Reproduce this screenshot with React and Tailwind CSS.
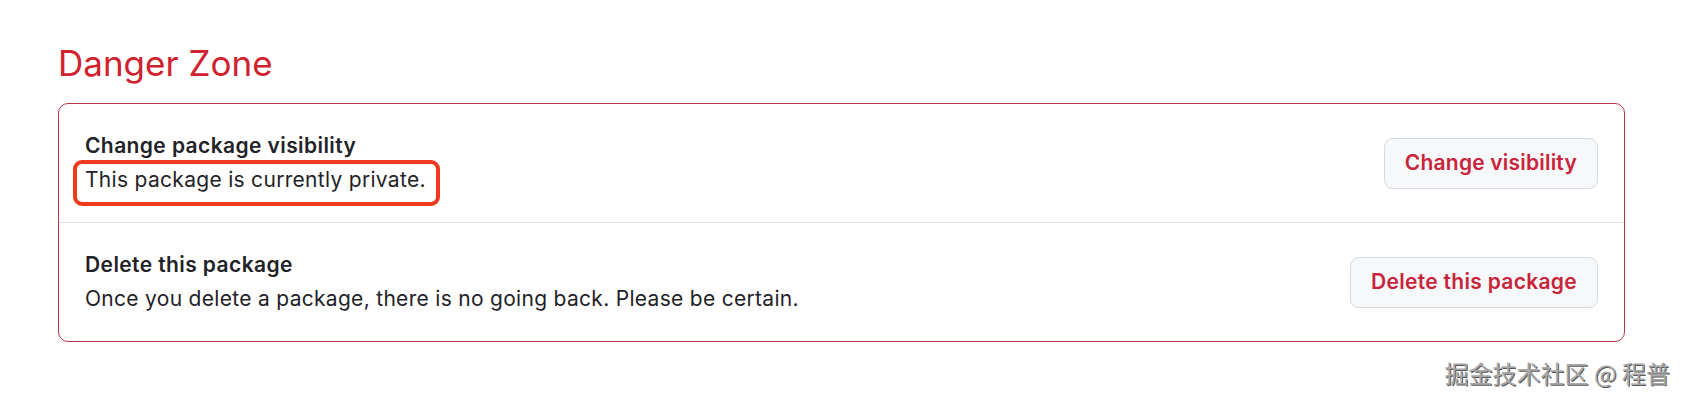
export default function App() {
  const font = { fontFamily: 'Inter, "Noto Sans", sans-serif' };
  return (
    <div className="relative h-[404px] w-[1686px] bg-white" style={font}>
      <div className="pl-[58px] pr-[61px] pt-[40px]">
        <h2 className="text-[35px] leading-[46px] font-normal text-[#cf222e]">Danger Zone</h2>
        <div className="mt-[17px] rounded-[10px] border border-[#b4364d]">
          <div className="flex items-center justify-between px-[26px] py-[27px]">
            <div className="text-[21px] leading-[30px] tracking-[0.3px] text-[#1f2328]">
              <div className="font-semibold tracking-[0.4px]">Change package visibility</div>
              <div className="relative mt-[4px] inline-block">
                This package is currently private.
                <span className="absolute -left-[12px] -right-[14px] -top-[5px] -bottom-[11px] rounded-[9px] border-[4px] border-[#ee3a1c]"></span>
              </div>
            </div>
            <button className="h-[51px] rounded-[9px] border border-[#d5dae0] bg-[#f6f8fa] px-[20px] text-[21px] font-semibold tracking-[0.2px] text-[#c9243a]">
              Change visibility
            </button>
          </div>
          <div className="flex items-center justify-between border-t border-[#dde1e5] px-[26px] py-[27px]">
            <div className="text-[21px] leading-[30px] tracking-[0.3px] text-[#1f2328]">
              <div className="font-semibold tracking-[0.4px]">Delete this package</div>
              <div className="mt-[4px]">Once you delete a package, there is no going back. Please be certain.</div>
            </div>
            <button className="h-[51px] rounded-[9px] border border-[#d5dae0] bg-[#f6f8fa] px-[20px] text-[21px] font-semibold tracking-[0.3px] text-[#c9243a]">
              Delete this package
            </button>
          </div>
        </div>
      </div>
      <div
        className="absolute right-[16px] top-[356px] text-[24px] leading-[34px] text-[#a8a8a8]"
        style={{ fontFamily: '"Noto Sans CJK SC", sans-serif', textShadow: '1px 1px 0 #5a5a5a, -1px -1px 0 #fff' }}
      >
        掘金技术社区 @ 程普
      </div>
    </div>
  );
}
